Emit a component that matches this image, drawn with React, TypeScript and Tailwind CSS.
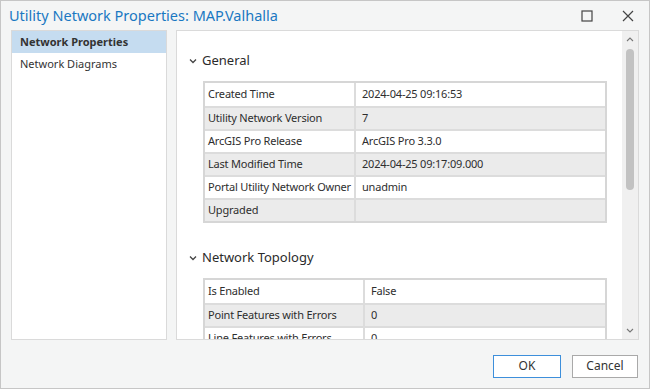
import React from 'react';

const font = { fontFamily: '"Noto Sans", "Open Sans", sans-serif' };

type Row = [string, string];

const general: Row[] = [
  ['Created Time', '2024-04-25 09:16:53'],
  ['Utility Network Version', '7'],
  ['ArcGIS Pro Release', 'ArcGIS Pro 3.3.0'],
  ['Last Modified Time', '2024-04-25 09:17:09.000'],
  ['Portal Utility Network Owner', 'unadmin'],
  ['Upgraded', ''],
];

const topology: Row[] = [
  ['Is Enabled', 'False'],
  ['Point Features with Errors', '0'],
  ['Line Features with Errors', '0'],
];

const Chevron = () => (
  <svg width="8" height="6" viewBox="0 0 8 6" className="mr-[5px]">
    <path d="M1 1.5 L4 4.5 L7 1.5" fill="none" stroke="#444" strokeWidth="1.3" />
  </svg>
);

// key/value table, zebra rows like the Pro property sheets
const PropTable = ({ rows, split }: { rows: Row[]; split: string }) => (
  <div className="ml-[26px] w-[404px] border-2 border-[#d6d6d6]">
    {rows.map(([k, v], i) => (
      <div
        key={k}
        className={`flex h-[23px] items-center text-[11px] tracking-[-0.2px] whitespace-nowrap text-[#2e2e2e] ${i > 0 ? 'border-t-2 border-[#dcdcdc]' : ''} ${i % 2 ? 'bg-[#ebebeb]' : 'bg-white'}`}
      >
        <div className={`${split} h-full flex items-center pl-[3px] border-r-2 border-[#dcdcdc] shrink-0`}>{k}</div>
        <div className="pl-[6px]">{v}</div>
      </div>
    ))}
  </div>
);

const Section = ({ title, children }: { title: string; children: React.ReactNode }) => (
  <div>
    <div className="flex items-center h-[20px] pl-[12px] text-[13px] text-[#2b2b2b]">
      <Chevron />
      {title}
    </div>
    <div className="mt-[10px]">{children}</div>
  </div>
);

export default function App() {
  return (
    <div style={font} className="w-[650px] h-[389px] bg-[#f4f5f5] border border-[#c6c6c6] flex flex-col overflow-hidden">
      {/* title bar */}
      <div className="h-[29px] flex items-center pl-[8px] pr-[15px]">
        <div className="text-[14.5px] text-[#1a78c2] leading-none">Utility Network Properties: MAP.Valhalla</div>
        <div className="ml-auto flex items-center gap-[29px]">
          <svg width="12" height="12" viewBox="0 0 12 12">
            <rect x="1" y="1" width="10" height="10" fill="none" stroke="#444" strokeWidth="1.2" />
          </svg>
          <svg width="12" height="12" viewBox="0 0 12 12">
            <path d="M1 1 L11 11 M11 1 L1 11" stroke="#444" strokeWidth="1.2" />
          </svg>
        </div>
      </div>

      {/* body */}
      <div className="h-[310px] flex pl-[10px] pr-[10px] gap-[9px]">
        <div className="w-[156px] bg-white border border-[#dadada] flex flex-col text-[11px] text-[#333]">
          <div className="h-[22px] bg-[#c5dcf0] flex items-center pl-[8px] font-bold">Network Properties</div>
          <div className="h-[23px] flex items-center pl-[8px]">Network Diagrams</div>
        </div>

        <div className="flex-1 bg-white border border-[#dadada] flex overflow-hidden">
          <div className="flex-1 overflow-hidden pt-[20px]">
            <Section title="General">
              <PropTable rows={general} split="w-[151px]" />
            </Section>
            <div className="h-[25px]" />
            <Section title="Network Topology">
              <PropTable rows={topology} split="w-[160px]" />
            </Section>
          </div>
          {/* scrollbar */}
          <div className="w-[16px] bg-[#f0f0f0] flex flex-col items-center py-[4px]">
            <svg width="8" height="5" viewBox="0 0 8 5" className="mt-[2px]">
              <path d="M1 4 L4 1 L7 4" fill="none" stroke="#777" strokeWidth="1.1" />
            </svg>
            <div className="mt-[7px] w-[8px] h-[141px] rounded-full bg-[#c2c2c2]" />
            <svg width="8" height="5" viewBox="0 0 8 5" className="mt-auto mb-[2px]">
              <path d="M1 1 L4 4 L7 1" fill="none" stroke="#777" strokeWidth="1.1" />
            </svg>
          </div>
        </div>
      </div>

      {/* footer */}
      <div className="flex-1 flex items-center justify-end pr-[11px] gap-[11px] pt-[4px]">
        <button className="w-[68px] h-[23px] bg-white border border-[#3d8fdb] text-[12px] text-[#333]">OK</button>
        <button className="w-[66px] h-[23px] bg-white border border-[#a9a9a9] text-[12px] text-[#333]">Cancel</button>
      </div>
    </div>
  );
}
